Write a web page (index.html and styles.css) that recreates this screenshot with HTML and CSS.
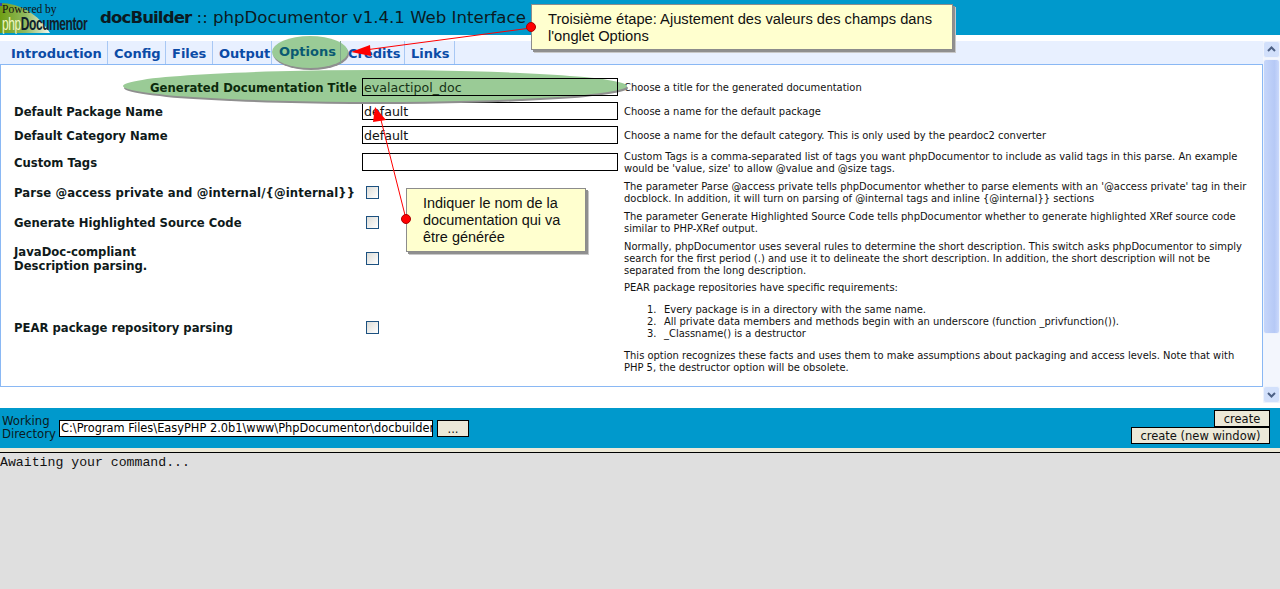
FILE: index.html
```html
<!DOCTYPE html>
<html lang="en">
<head>
<meta charset="utf-8">
<title>docBuilder</title>
<link rel="stylesheet" href="styles.css">
</head>
<body>
<header class="top">
  <div class="logo">
    <svg class="logo-bg" width="88" height="35" viewBox="0 0 88 35">
      <defs><linearGradient id="lg" x1="0" x2="1" y1="0" y2="0"><stop offset="0" stop-color="#6f9e14"/><stop offset=".5" stop-color="#8fb95e"/><stop offset="1" stop-color="#f4f7f0"/></linearGradient></defs>
      <path d="M0 3C20 3 38 14 50 33H0Z" fill="url(#lg)"/>
      <rect x="0" y="3" width="2" height="3" fill="#3344aa"/>
    </svg>
    <span class="logo-by">Powered by</span>
    <span class="logo-name"><span class="logo-php">php</span>Documentor</span>
  </div>
  <h1 class="title"><b>docBuilder</b> :: phpDocumentor v1.4.1 Web Interface</h1>
</header>
<div class="main">
  <div class="left">
    <nav class="tabs">
      <a class="tab t1">Introduction</a><a class="tab t2">Config</a><a class="tab t3">Files</a><a class="tab t4">Output</a><a class="tab t5">Options</a><a class="tab t6">Credits</a><a class="tab t7">Links</a>
    </nav>
    <section class="panel">
      <div class="row r1"><label class="lbl lbl-hi">Generated Documentation Title</label><div class="ctl"><span class="input input-hi">evalactipol_doc</span></div><p class="desc">Choose a title for the generated documentation</p></div>
      <div class="row r2"><label class="lbl">Default Package Name</label><div class="ctl"><span class="input">default</span></div><p class="desc">Choose a name for the default package</p></div>
      <div class="row r3"><label class="lbl">Default Category Name</label><div class="ctl"><span class="input">default</span></div><p class="desc">Choose a name for the default category. This is only used by the peardoc2 converter</p></div>
      <div class="row r4"><label class="lbl">Custom Tags</label><div class="ctl"><span class="input"></span></div><p class="desc">Custom Tags is a comma-separated list of tags you want phpDocumentor to include as valid tags in this parse. An example<br>would be 'value, size' to allow @value and @size tags.</p></div>
      <div class="row r5"><label class="lbl">Parse @access private and @internal/{@internal}}</label><div class="ctl"><span class="check"></span></div><p class="desc">The parameter Parse @access private tells phpDocumentor whether to parse elements with an '@access private' tag in their<br>docblock. In addition, it will turn on parsing of @internal tags and inline {@internal}} sections</p></div>
      <div class="row r6"><label class="lbl">Generate Highlighted Source Code</label><div class="ctl"><span class="check"></span></div><p class="desc">The parameter Generate Highlighted Source Code tells phpDocumentor whether to generate highlighted XRef source code<br>similar to PHP-XRef output.</p></div>
      <div class="row r7"><label class="lbl">JavaDoc-compliant<br>Description parsing.</label><div class="ctl"><span class="check"></span></div><p class="desc">Normally, phpDocumentor uses several rules to determine the short description. This switch asks phpDocumentor to simply<br>search for the first period (.) and use it to delineate the short description. In addition, the short description will not be<br>separated from the long description.</p></div>
      <div class="row r8"><label class="lbl">PEAR package repository parsing</label><div class="ctl"><span class="check"></span></div>
        <div class="desc">
          <p class="para">PEAR package repositories have specific requirements:</p>
          <ol class="reqs"><li>Every package is in a directory with the same name.</li><li>All private data members and methods begin with an underscore (function _privfunction()).</li><li>_Classname() is a destructor</li></ol>
          <p class="para">This option recognizes these facts and uses them to make assumptions about packaging and access levels. Note that with<br>PHP 5, the destructor option will be obsolete.</p>
        </div>
      </div>
    </section>
  </div>
  <div class="scroll">
    <span class="sbtn"><svg width="9" height="7" viewBox="0 0 9 7"><path d="M1 5l3.5-3.5L8 5" fill="none" stroke="#4d6185" stroke-width="2"/></svg></span>
    <span class="thumb"></span>
    <span class="strack"></span>
    <span class="sbtn"><svg width="9" height="7" viewBox="0 0 9 7"><path d="M1 2l3.5 3.5L8 2" fill="none" stroke="#4d6185" stroke-width="2"/></svg></span>
  </div>
</div>
<form class="bar">
  <span class="wd">Working<br>Directory</span>
  <span class="path">C:\Program Files\EasyPHP 2.0b1\www\PhpDocumentor\docbuilder</span>
  <span class="btn browse">...</span>
  <div class="actions"><span class="btn">create</span><span class="btn">create (new window)</span></div>
</form>
<pre class="console">Awaiting your command...</pre>

<svg class="ink blobs" width="1280" height="589" viewBox="0 0 1280 589">
  <ellipse cx="311" cy="54" rx="38" ry="16" class="shadow"/>
  <ellipse cx="310" cy="52" rx="38" ry="16" class="green"/>
  <ellipse cx="376" cy="88" rx="252" ry="16" class="shadow"/>
  <ellipse cx="375" cy="86" rx="252" ry="16" class="green"/>
</svg>
<div class="note note-a">Troisième étape: Ajustement des valeurs des champs dans l'onglet Options</div>
<div class="note note-b">Indiquer le nom de la documentation qui va être générée</div>
<svg class="ink arrows" width="1280" height="589" viewBox="0 0 1280 589">
  <line x1="531" y1="28" x2="365" y2="50" class="arrow"/>
  <path d="M351 52L370 45L371 56Z" fill="#f00"/>
  <line x1="406" y1="219" x2="381" y2="120" class="arrow"/>
  <path d="M375 107L386 120L373 122Z" fill="#f00"/>
  <circle cx="531" cy="27" r="4.500" fill="#f00" stroke="#a00"/>
  <circle cx="406" cy="219" r="4.500" fill="#f00" stroke="#a00"/>
</svg>
</body>
</html>
```
FILE: styles.css
```css
* { box-sizing: border-box; }
html, body { margin: 0; padding: 0; }
body {
  width: 1280px;
  height: 589px;
  overflow: hidden;
  position: relative;
  background: #fff;
  font-family: "DejaVu Sans", Verdana, sans-serif;
  color: #000;
}
.top {
  height: 35px;
  background: #0099cc;
  display: flex;
  align-items: center;
}
.logo {
  width: 100px;
  height: 35px;
  position: relative;
  flex: none;
}
.logo-bg { position: absolute; left: 0; top: 0; }
.logo-by {
  position: absolute;
  left: 2px;
  top: 3px;
  font: 11.500px/13px "Liberation Serif", serif;
  color: #111;
}
.logo-name {
  position: absolute;
  left: 2px;
  top: 15px;
  font: bold 18px/19px "Liberation Sans", Arial, sans-serif;
  letter-spacing: -.6px;
  color: #10212b;
  transform: scaleX(.665);
  transform-origin: left center;
  white-space: nowrap;
}
.logo-php { color: #f2f8c4; font-weight: normal; }
.title {
  margin: 0;
  font-size: 16.600px;
  font-weight: normal;
  line-height: 35px;
  white-space: nowrap;
  color: #0b1a22;
}
.title b { font-weight: bold; letter-spacing: -.9px; }
.main {
  display: flex;
  padding-top: 6px;
  height: 373px;
}
.left { width: 1263px; flex: none; display: flex; flex-direction: column; }
.tabs {
  height: 23px;
  background: #e8f0ff;
  display: flex;
}
.tab {
  font-size: 13px;
  font-weight: bold;
  line-height: 25px;
  color: #0b4ba6;
  padding-left: 6px;
  border-right: 1px solid #a8c8f4;
  white-space: nowrap;
  height: 23px;
  flex: none;
}
.t1 { width: 108px; padding-left: 11px; }
.t2 { width: 58px; }
.t3 { width: 47px; }
.t4 { width: 59px; }
.t5 {
  width: 69px;
  position: relative;
  z-index: 2;
  padding-left: 7px;
  line-height: 21px;
  color: #0a5a72;
  border-right-color: #7fa88a;
}
.t6 { width: 64px; padding-left: 7px; }
.t7 { width: 50px; }
.panel {
  height: 323px;
  border: 1px solid #8ab8f4;
  background: #fff;
  padding-top: 10px;
}
.row {
  display: grid;
  grid-template-columns: 361px 256px 1fr;
  align-items: center;
}
.lbl {
  font-size: 11.650px;
  font-weight: bold;
  line-height: 14px;
  padding: 2px 0 0 13px;
  color: #0f1a1a;
  white-space: nowrap;
}
.r5 .lbl { letter-spacing: .13px; }
.lbl-hi {
  position: relative;
  z-index: 2;
  text-align: right;
  padding-right: 5px;
  color: #0c2a0c;
}
.ctl { display: flex; align-items: center; }
.input {
  width: 256px;
  height: 18px;
  border: 1px solid #000;
  background: #fff;
  font-size: 12.600px;
  line-height: 17px;
  padding-left: 1px;
  color: #111;
}
.input-hi {
  position: relative;
  z-index: 2;
  background: transparent;
  color: #173317;
}
.check {
  display: block;
  width: 13px;
  height: 13px;
  margin-left: 4px;
  border: 1px solid #1c5180;
  background: linear-gradient(135deg, #dcdcd7, #fff);
}
.desc {
  margin: 0;
  padding: 2px 0 0 6px;
  font-size: 9.950px;
  line-height: 12px;
  color: #111;
  white-space: nowrap;
}
.r1, .r2, .r3 { height: 24px; }
.r4, .r5, .r6 { height: 30px; }
.r7 { height: 42px; }
.r8 { height: 96px; }
.para { margin: 0; }
.reqs {
  margin: 10px 0;
  padding-left: 23px;
  list-style: none;
  counter-reset: req;
}
.reqs li { counter-increment: req; }
.reqs li::before {
  content: counter(req) ".";
  display: inline-block;
  width: 17px;
}
.scroll {
  width: 17px;
  height: 362px;
  display: flex;
  flex-direction: column;
  background: #f3f6fd;
}
.sbtn {
  height: 17px;
  background: #d2e0fb;
  border: 1px solid #eef3fd;
  border-radius: 3px;
  display: flex;
  align-items: center;
  justify-content: center;
  flex: none;
}
.thumb {
  height: 275px;
  margin-top: 1px;
  flex: none;
  border: 1px solid #eef3fd;
  border-radius: 3px;
  background: linear-gradient(90deg, #c6d6fa, #b6c9f6 70%, #c9d8fb);
}
.strack { flex: 1; }
.bar {
  margin: 0;
  height: 40px;
  background: #0099cc;
  display: flex;
  align-items: center;
  padding-left: 2px;
  position: relative;
  font-size: 11.700px;
}
.wd { width: 57px; line-height: 13px; color: #0b1a22; flex: none; }
.path {
  width: 374px;
  height: 17px;
  border: 1px solid #000;
  background: #fff;
  font-size: 11.400px;
  line-height: 15px;
  padding-left: 1px;
  white-space: nowrap;
  overflow: hidden;
  flex: none;
}
.btn {
  display: block;
  height: 17px;
  border: 1px solid #000;
  background: #ece9d8;
  font-size: 11.500px;
  line-height: 16px;
  text-align: center;
  white-space: nowrap;
  color: #111;
}
.browse { width: 32px; margin-left: 4px; }
.actions {
  position: absolute;
  right: 10px;
  top: 2px;
  display: flex;
  flex-direction: column;
  align-items: flex-end;
}
.actions .btn:first-child { width: 56px; }
.actions .btn:last-child { width: 139px; }
.console {
  margin: 4px 0 0;
  height: 137px;
  border-top: 1px solid #000;
  box-shadow: 0 -4px 0 #ece9d8;
  background: #dfdfdf;
  font: 13.200px/19px "Liberation Mono", "Courier New", monospace;
  color: #111;
  white-space: pre;
}
.ink { position: absolute; left: 0; top: 0; pointer-events: none; }
.blobs { z-index: 1; }
.arrows { z-index: 4; }
.shadow { fill: #8f8f8f; }
.green { fill: #9acb96; }
.arrow { stroke: #f00; stroke-width: 1; }
.note {
  position: absolute;
  z-index: 3;
  background: #ffffcf;
  border: 1px solid #8c8c8c;
  box-shadow: 2px 2px 0 #8f8f8f, 3px 3px 0 #c8c8c8;
  font-family: "Liberation Sans", Arial, sans-serif;
  line-height: 17px;
  color: #111;
}
.note-a { left: 531px; top: 4px; width: 422px; height: 46px; padding: 6px 10px 0 16px; font-size: 14.700px; }
.note-b { left: 406px; top: 188px; width: 180px; height: 64px; padding: 6px 10px 0 16px; font-size: 14.450px; }
```
